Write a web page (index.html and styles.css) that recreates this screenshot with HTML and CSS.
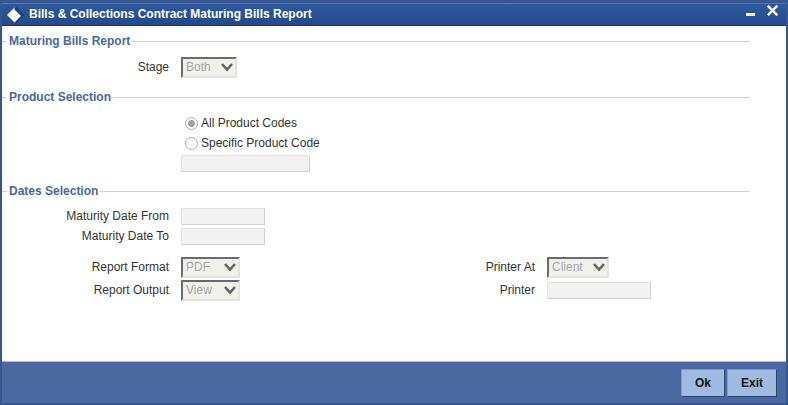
FILE: index.html
```html
<!DOCTYPE html>
<html lang="en">
<head>
    <meta charset="UTF-8">
    <meta name="viewport" content="width=device-width, initial-scale=1.0">
    <title>Bills &amp; Collections Contract Maturing Bills Report</title>
    <link rel="stylesheet" href="styles.css">
</head>
<body>
    <form class="window">
        <header class="titlebar">
            <svg class="logo" width="17" height="16" viewBox="0 0 17 16">
                <path d="M9 0L17 8L9 16Z" fill="#0d3a68"/>
                <path d="M7.500 0.500L15 8L7.500 15.500L0 8Z" fill="#fff"/>
                <path d="M9 0L17 8L15 10L7 2Z" fill="#0b4678"/>
            </svg>
            <h1>Bills &amp; Collections Contract Maturing Bills Report</h1>
            <button type="button" class="win-btn" aria-label="Minimize">
                <svg width="11" height="11" viewBox="0 0 11 11"><path d="M1 8H10V11H1Z" fill="#fff"/></svg>
            </button>
            <button type="button" class="win-btn" aria-label="Close">
                <svg width="11" height="11" viewBox="0 0 11 11"><path d="M0.700 0.700L10.300 10.300M10.300 0.700L0.700 10.300" stroke="#fff" stroke-width="2.400"/></svg>
            </button>
        </header>

        <main class="content">
            <fieldset class="stage">
                <legend>Maturing Bills Report</legend>
                <div class="row">
                    <label for="stage">Stage</label>
                    <select id="stage" class="w-stage" disabled><option>Both</option></select>
                </div>
            </fieldset>

            <fieldset class="product">
                <legend>Product Selection</legend>
                <div class="row radio-row">
                    <input type="radio" id="allCodes" name="product" checked disabled>
                    <label for="allCodes">All Product Codes</label>
                </div>
                <div class="row radio-row">
                    <input type="radio" id="oneCode" name="product" disabled>
                    <label for="oneCode">Specific Product Code</label>
                </div>
                <div class="row indent">
                    <input type="text" class="w-code" aria-label="Product Code" disabled>
                </div>
            </fieldset>

            <fieldset class="dates">
                <legend>Dates Selection</legend>
                <div class="row">
                    <label for="dateFrom">Maturity Date From</label>
                    <input type="text" id="dateFrom" class="w-date" disabled>
                </div>
                <div class="row">
                    <label for="dateTo">Maturity Date To</label>
                    <input type="text" id="dateTo" class="w-date" disabled>
                </div>
            </fieldset>

            <div class="report">
                <div class="row">
                    <label for="format">Report Format</label>
                    <select id="format" class="w-report" disabled><option>PDF</option></select>
                </div>
                <div class="row">
                    <label for="printerAt">Printer At</label>
                    <select id="printerAt" class="w-client" disabled><option>Client</option></select>
                </div>
                <div class="row">
                    <label for="output">Report Output</label>
                    <select id="output" class="w-report" disabled><option>View</option></select>
                </div>
                <div class="row">
                    <label for="printer">Printer</label>
                    <input type="text" id="printer" class="w-printer" disabled>
                </div>
            </div>
        </main>

        <footer class="footer">
            <button type="button" class="btn">Ok</button>
            <button type="button" class="btn">Exit</button>
        </footer>
    </form>
</body>
</html>
```
FILE: styles.css
```css
* {
    box-sizing: border-box;
}
body {
    margin: 0;
    font-family: "Liberation Sans", Arial, sans-serif;
    font-size: 12px;
    line-height: 17px;
    color: #333;
}
.window {
    display: flex;
    flex-direction: column;
    min-height: 100vh;
    border: 2px solid #35568f;
    border-top-width: 3px;
    background: #fff;
}

/* title bar */
.titlebar {
    display: flex;
    align-items: center;
    gap: 11px;
    height: 23px;
    padding: 0 8px 0 5px;
    border-top: 1px solid #4d7ab8;
    border-bottom: 1px solid #1a3468;
    background: linear-gradient(#2f599f, #25488a);
}
.titlebar h1 {
    flex: 1;
    margin: 0 0 0 -6px;
    font-size: 12px;
    color: #fff;
}
.win-btn {
    display: flex;
    align-items: flex-start;
    height: 19px;
    padding: 0;
    border: 0;
    background: none;
    cursor: pointer;
}

/* form sections */
.content {
    flex: 1;
    padding-top: 7px;
}
fieldset {
    display: grid;
    gap: 2px;
    min-width: 0;
    margin: 0 36px 0 0;
    padding: 0 0 11px 5px;
    border: 0;
    border-top: 1px solid #c5d5e2;
}
legend {
    padding: 0 2px;
    font-weight: bold;
    color: #4a689c;
}
.stage {
    padding-top: 7px;
}
.product {
    padding-top: 8px;
}
.dates {
    padding-top: 7px;
    padding-bottom: 12px;
}
.row {
    display: flex;
    align-items: center;
    gap: 12px;
    min-height: 18px;
}
.row label {
    width: 162px;
    text-align: right;
}
.radio-row {
    gap: 3px;
    padding-left: 178px;
}
.radio-row label {
    width: auto;
    text-align: left;
}
.indent {
    padding-left: 174px;
}
.report {
    display: grid;
    grid-template-columns: 1fr 1fr;
    gap: 2px 0;
    padding: 0 47px 12px 5px;
}

/* controls */
input[type="text"] {
    height: 17px;
    padding: 0 2px;
    border: 1px solid #e3e3e3;
    border-right-color: #d0d0d0;
    border-bottom-color: #d0d0d0;
    background: #f2f2f2;
    font: inherit;
}
input[type="radio"] {
    appearance: none;
    width: 13px;
    height: 13px;
    margin: 0;
    border: 1px solid #adadad;
    border-radius: 50%;
    background: #fff;
}
input[type="radio"]:checked {
    background: radial-gradient(circle, #a0a0a0 3px, #fff 4px);
}
select {
    appearance: none;
    height: 21px;
    padding: 0 0 0 3px;
    border: 2px solid #e3e3e0;
    border-top-color: #6b6b6b;
    border-left-color: #6b6b6b;
    border-radius: 0;
    background: #f1f0ea url("data:image/svg+xml,%3Csvg xmlns='http://www.w3.org/2000/svg' width='12' height='9'%3E%3Cpath d='M1 1L6 6.500L11 1' fill='none' stroke='%23636363' stroke-width='2.600'/%3E%3C/svg%3E") no-repeat right 2px top 4px;
    font: inherit;
    color: #a3a3a3;
    text-shadow: 1px 1px #fff;
}
select:disabled {
    opacity: 1;
}
.w-stage {
    width: 56px;
}
.w-code {
    width: 129px;
}
.w-date {
    width: 84px;
}
.w-report {
    width: 59px;
}
.w-client {
    width: 62px;
}
.w-printer {
    width: 104px;
}

/* footer */
.footer {
    display: flex;
    justify-content: flex-end;
    gap: 2px;
    padding: 7px 9px 6px;
    border-top: 1px solid #a9bbd9;
    background: #4a689f;
}
.btn {
    height: 28px;
    padding: 0 13px;
    border: 1px solid #7d9cc9;
    border-right-color: #2c4470;
    border-bottom-color: #2c4470;
    background: #9fbbe2;
    font: bold 12px "Liberation Sans", Arial, sans-serif;
    color: #111;
    cursor: pointer;
}
```
